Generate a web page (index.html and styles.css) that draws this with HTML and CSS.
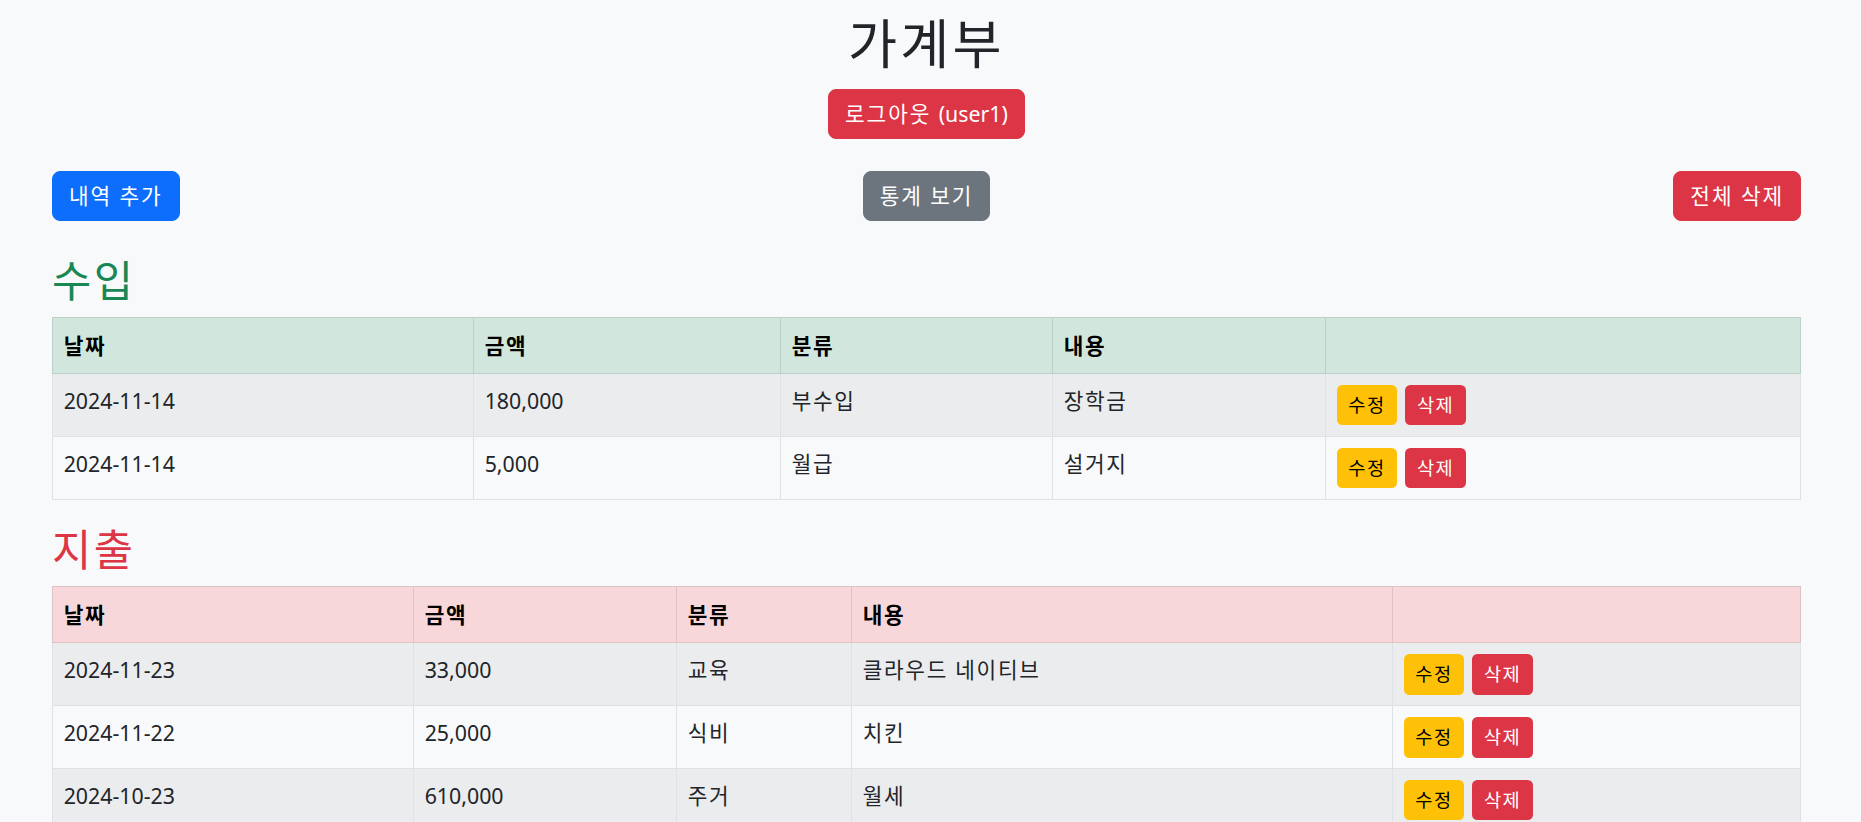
FILE: index.html
```html
<!DOCTYPE html>
<html lang="ko">
<head>
<meta charset="utf-8">
<title>가계부</title>
<link rel="stylesheet" href="styles.css">
</head>
<body>
<div class="page">
  <header class="header">
    <h1 class="title">가계부</h1>
    <button class="btn btn-danger">로그아웃 <span class="latin">(user1)</span></button>
  </header>

  <div class="toolbar">
    <button class="btn btn-primary">내역 추가</button>
    <button class="btn btn-secondary">통계 보기</button>
    <button class="btn btn-danger">전체 삭제</button>
  </div>

  <section class="block">
    <h2 class="section-title text-income">수입</h2>
    <table class="ledger ledger-income">
      <colgroup>
        <col class="in-date"><col class="in-amount"><col class="in-cat"><col class="in-desc"><col>
      </colgroup>
      <thead>
        <tr><th>날짜</th><th>금액</th><th>분류</th><th>내용</th><th></th></tr>
      </thead>
      <tbody>
        <tr>
          <td>2024-11-14</td><td>180,000</td><td>부수입</td><td>장학금</td>
          <td><div class="actions"><button class="btn-sm btn-warning">수정</button><button class="btn-sm btn-danger">삭제</button></div></td>
        </tr>
        <tr>
          <td>2024-11-14</td><td>5,000</td><td>월급</td><td>설거지</td>
          <td><div class="actions"><button class="btn-sm btn-warning">수정</button><button class="btn-sm btn-danger">삭제</button></div></td>
        </tr>
      </tbody>
    </table>
  </section>

  <section class="block">
    <h2 class="section-title text-expense">지출</h2>
    <table class="ledger ledger-expense">
      <colgroup>
        <col class="ex-date"><col class="ex-amount"><col class="ex-cat"><col class="ex-desc"><col>
      </colgroup>
      <thead>
        <tr><th>날짜</th><th>금액</th><th>분류</th><th>내용</th><th></th></tr>
      </thead>
      <tbody>
        <tr>
          <td>2024-11-23</td><td>33,000</td><td>교육</td><td>클라우드 네이티브</td>
          <td><div class="actions"><button class="btn-sm btn-warning">수정</button><button class="btn-sm btn-danger">삭제</button></div></td>
        </tr>
        <tr>
          <td>2024-11-22</td><td>25,000</td><td>식비</td><td>치킨</td>
          <td><div class="actions"><button class="btn-sm btn-warning">수정</button><button class="btn-sm btn-danger">삭제</button></div></td>
        </tr>
        <tr>
          <td>2024-10-23</td><td>610,000</td><td>주거</td><td>월세</td>
          <td><div class="actions"><button class="btn-sm btn-warning">수정</button><button class="btn-sm btn-danger">삭제</button></div></td>
        </tr>
      </tbody>
    </table>
  </section>
</div>
</body>
</html>
```

FILE: styles.css
```css
html {
  scrollbar-width: none;
}

body {
  margin: 0;
  background: #f8f9fa;
  color: #212529;
  font-family: "Noto Sans", "Noto Sans CJK KR", sans-serif;
  font-size: 21.33px;
  line-height: 1.5;
}

.page {
  padding: 0 60px 0 52px;
}

.header {
  display: flex;
  flex-direction: column;
  align-items: center;
}

.title {
  margin: 12px 0 13px;
  font-size: 53.33px;
  font-weight: 400;
  line-height: 1.2;
  letter-spacing: 0.06em;
  color: #212529;
}

.btn {
  font-family: inherit;
  font-size: 21.33px;
  line-height: 32px;
  padding: 8px 16px;
  border: 1.33px solid transparent;
  border-radius: 8px;
  color: #fff;
  letter-spacing: 0.09em;
  cursor: pointer;
}

.latin {
  letter-spacing: 0;
}

.btn-primary { background: #0d6efd; border-color: #0d6efd; }
.btn-secondary { background: #6c757d; border-color: #6c757d; }
.btn-danger { background: #dc3545; border-color: #dc3545; color: #fff; }
.btn-warning { background: #ffc107; border-color: #ffc107; color: #000; }

.toolbar {
  display: flex;
  justify-content: space-between;
  align-items: center;
  margin-top: 32px;
  margin-bottom: 34px;
}

.section-title {
  margin: 0 0 10.67px;
  font-size: 42.67px;
  font-weight: 400;
  line-height: 1.2;
  letter-spacing: 0.06em;
}

.text-income { color: #198754; }
.text-expense { color: #dc3545; }

.block + .block {
  margin-top: 24px;
}

.ledger {
  width: 100%;
  border-collapse: collapse;
  table-layout: fixed;
  border: 1px solid #dee2e6;
}

.ledger th,
.ledger td {
  padding: 10.67px;
  text-align: left;
  vertical-align: top;
  border: 1px solid #dee2e6;
}

.ledger th {
  padding-top: 11.67px;
  padding-bottom: 11.67px;
  font-weight: 700;
  color: #000;
  letter-spacing: 0.08em;
}

.ledger td:nth-child(3),
.ledger td:nth-child(4) {
  letter-spacing: 0.08em;
}

.ledger-income thead th {
  background: #d1e7dd;
  border-color: #bcd0c7;
}

.ledger-expense thead th {
  background: #f8d7da;
  border-color: #dfc2c4;
}

.ledger tbody tr:nth-child(odd) td {
  background: #ebeced;
}

.ledger tbody tr:nth-child(even) td {
  background: #f8f9fa;
}

.in-date { width: 421px; }
.in-amount { width: 307px; }
.in-cat { width: 272px; }
.in-desc { width: 273px; }

.ex-date { width: 361px; }
.ex-amount { width: 263px; }
.ex-cat { width: 175px; }
.ex-desc { width: 541px; }

.actions {
  display: flex;
  gap: 8px;
}

.btn-sm {
  font-family: inherit;
  font-size: 18.67px;
  line-height: 28px;
  padding: 5.33px 10.67px;
  border: 1.33px solid transparent;
  border-radius: 5.33px;
  letter-spacing: 0.08em;
  cursor: pointer;
}
```
